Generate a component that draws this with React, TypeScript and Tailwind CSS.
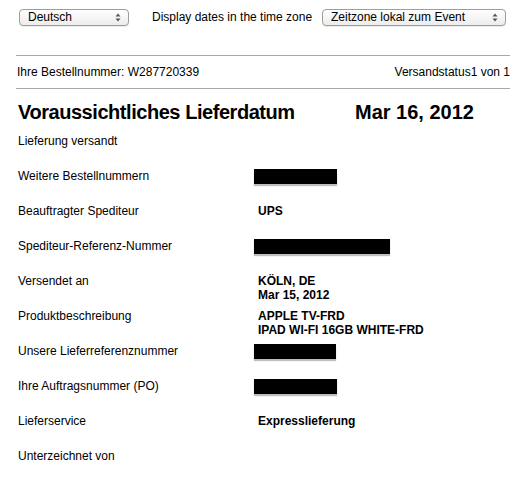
import React from 'react'

type Row = {
  label: string
  value?: string[]
  masked?: number
}

const rows: Row[] = [
  { label: 'Lieferung versandt' },
  { label: 'Weitere Bestellnummern', masked: 83 },
  { label: 'Beauftragter Spediteur', value: ['UPS'] },
  { label: 'Spediteur-Referenz-Nummer', masked: 136 },
  { label: 'Versendet an', value: ['KÖLN, DE', 'Mar 15, 2012'] },
  { label: 'Produktbeschreibung', value: ['APPLE TV-FRD', 'IPAD WI-FI 16GB WHITE-FRD'] },
  { label: 'Unsere Lieferreferenznummer', masked: 82 },
  { label: 'Ihre Auftragsnummer (PO)', masked: 83 },
  { label: 'Lieferservice', value: ['Expresslieferung'] },
  { label: 'Unterzeichnet von' },
]

const Arrows = () => (
  <svg width="6" height="9" viewBox="0 0 6 9" className="shrink-0">
    <path d="M3 0.5 L5.5 3.5 H0.5 Z" fill="#555" />
    <path d="M3 8.5 L5.5 5.5 H0.5 Z" fill="#555" />
  </svg>
)

const Dropdown = ({ text, width }: { text: string; width: string }) => (
  <div
    className={`${width} h-[17px] flex items-center justify-between pl-[8px] pr-[7px] rounded-[4px] border border-[#9d9d9d] bg-gradient-to-b from-white to-[#ececec] shadow-[0_1px_0_rgba(0,0,0,0.08)] text-[12px] leading-none text-black`}
  >
    <span>{text}</span>
    <Arrows />
  </div>
)

const App = () => {
  return (
    <div className="w-[531px] h-[480px] bg-white text-black font-['Liberation_Sans',Arial,sans-serif] overflow-hidden">
      <div className="flex items-center pt-[8px] pl-[19px]">
        <Dropdown text="Deutsch" width="w-[110px]" />
        <span className="ml-[23px] w-[170px] text-[12px]">Display dates in the time zone</span>
        <Dropdown text="Zeitzone lokal zum Event" width="w-[184px]" />
      </div>

      <div className="ml-[16px] w-[494px] mt-[29px] border-t border-[#a8a8a8]" />
      <div className="ml-[16px] w-[494px] h-[32px] flex items-center justify-between pl-[1px] text-[12px]">
        <span>Ihre Bestellnummer: W287720339</span>
        <span>Versandstatus1 von 1</span>
      </div>
      <div className="ml-[16px] w-[494px] border-t border-[#a8a8a8]" />

      <div className="ml-[18px] mt-[10px] flex items-center h-[26px] text-[20px] font-bold">
        <span className="w-[337px] tracking-[-0.45px]">Voraussichtliches Lieferdatum</span>
        <span>Mar 16, 2012</span>
      </div>

      <div className="mt-[9px] ml-[18px] text-[12px] leading-[14px]">
        {rows.map((row) => (
          <div key={row.label} className="grid grid-cols-[236px_1fr] h-[35px] items-start">
            <span>{row.label}</span>
            <div>
              {row.masked ? (
                <div
                  className="h-[15px] bg-black shadow-[0_2px_1px_rgba(0,0,0,0.25)]"
                  style={{ width: row.masked }}
                />
              ) : (
                row.value?.map((line) => (
                  <div key={line} className="pl-[4px] font-bold">
                    {line}
                  </div>
                ))
              )}
            </div>
          </div>
        ))}
      </div>
    </div>
  )
}

export default App
